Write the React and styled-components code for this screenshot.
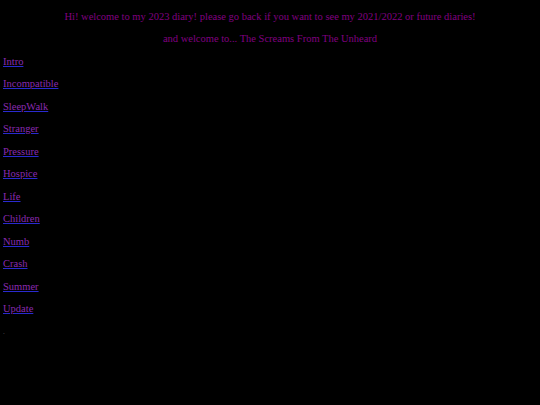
import React from 'react';
import styled, { createGlobalStyle } from 'styled-components';

const GlobalStyle = createGlobalStyle`
  html, body {
    margin: 0;
    padding: 0;
    background: #000000;
  }
  body {
    padding: 0 3px;
    font-family: "Liberation Serif", "Times New Roman", serif;
    font-size: 10.5px;
    line-height: 12px;
  }
`

const Page = styled.div`
  min-height: 405px;
`

const Intro = styled.p`
  margin: 10.5px 0;
  text-align: center;
  color: #800080;
`

const EntryLine = styled.p`
  margin: 10.5px 0;
`

const Entry = styled.a`
  color: #8a2ab0;
  text-decoration: underline;
  text-decoration-color: #2a2ad0;
  cursor: pointer;
`

const Dot = styled.p`
  margin: 10.5px 0;
  color: #5a5a5a;
  font-size: 7px;
`

const entries = [
  'Intro',
  'Incompatible',
  'SleepWalk',
  'Stranger',
  'Pressure',
  'Hospice',
  'Life',
  'Children',
  'Numb',
  'Crash',
  'Summer',
  'Update',
]

function App() {
  return (
    <Page>
      <GlobalStyle />
      <Intro>Hi! welcome to my 2023 diary! please go back if you want to see my 2021/2022 or future diaries!</Intro>
      <Intro>and welcome to... The Screams From The Unheard</Intro>
      {entries.map((name) => (
        <EntryLine key={name}>
          <Entry href="#">{name}</Entry>
        </EntryLine>
      ))}
      <Dot>.</Dot>
    </Page>
  )
}

export default App;
